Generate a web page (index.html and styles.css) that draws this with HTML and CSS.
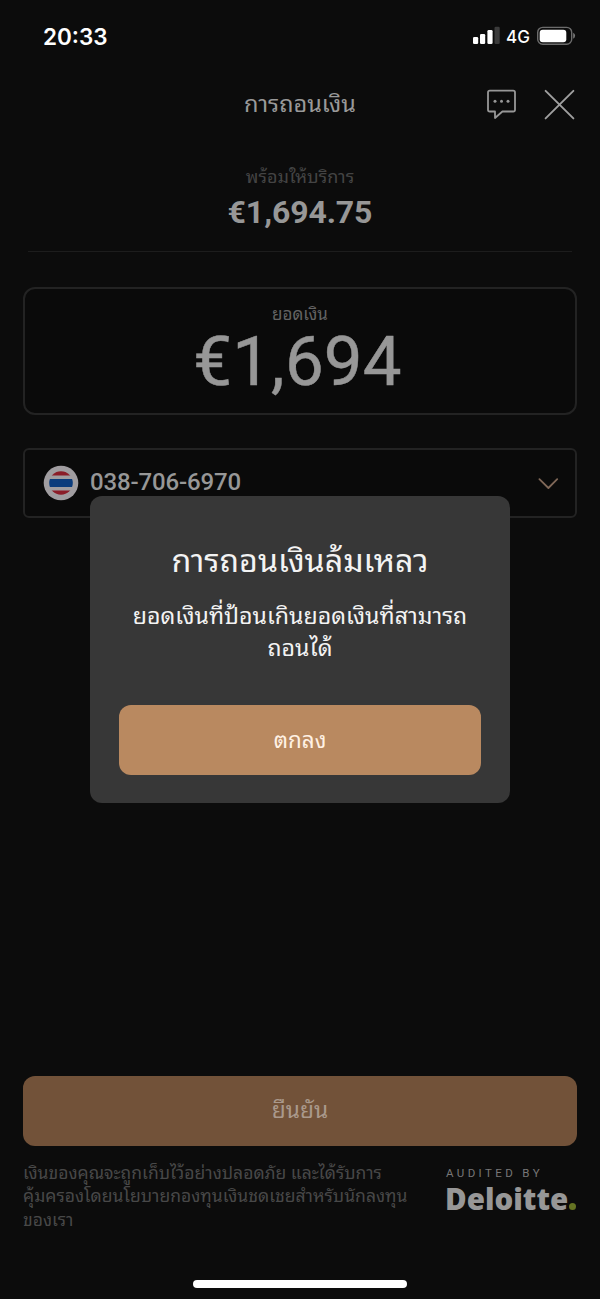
FILE: index.html
```html
<!DOCTYPE html>
<html lang="th">
<head>
<meta charset="utf-8">
<title>การถอนเงิน</title>
<link rel="stylesheet" href="styles.css">
</head>
<body>
<div class="screen">
  <div class="status-bar">
    <span class="clock">20:33</span>
    <div class="status-icons">
      <svg class="signal" width="28" height="18" viewBox="0 0 28 18">
        <rect x="0" y="11" width="5.2" height="7" rx="1.3" fill="#fff"/>
        <rect x="7" y="8" width="5.2" height="10" rx="1.3" fill="#fff"/>
        <rect x="14.4" y="4" width="5.2" height="14" rx="1.3" fill="#fff"/>
        <rect x="21.5" y="0.8" width="5.2" height="17.2" rx="1.3" fill="#3b3b3b"/>
      </svg>
      <span class="network">4G</span>
      <svg class="battery" width="40" height="20" viewBox="0 0 40 20">
        <rect x="0.7" y="1.4" width="34" height="16.8" rx="5" fill="none" stroke="#6c6c6c" stroke-width="1.4"/>
        <rect x="2.7" y="3.8" width="26.6" height="12.4" rx="3" fill="#fff"/>
        <path d="M36.2 6.8a3.3 3.3 0 0 1 0 6z" fill="#777"/>
      </svg>
    </div>
  </div>

  <header class="header">
    <h1 class="title">การถอนเงิน</h1>
    <div class="header-actions">
      <svg width="32" height="32" viewBox="0 0 32 32" fill="none" stroke="#979797" stroke-width="1.8" stroke-linejoin="round">
        <path d="M3.8 2.6H27.2Q29 2.6 29 4.4V21.7Q29 23.5 27.2 23.5H16.4L9 30V23.5H3.8Q2 23.5 2 21.7V4.4Q2 2.6 3.8 2.6Z"/>
        <g fill="#979797" stroke="none"><circle cx="9" cy="13.2" r="1.5"/><circle cx="15.5" cy="13.2" r="1.5"/><circle cx="22" cy="13.2" r="1.5"/></g>
      </svg>
      <svg width="32" height="32" viewBox="0 0 32 32" stroke="#a0a0a0" stroke-width="1.9" stroke-linecap="round">
        <path d="M1.6 2.8L29.4 30.4M29.4 2.8L1.6 30.4"/>
      </svg>
    </div>
  </header>

  <section class="available">
    <div class="available-label">พร้อมให้บริการ</div>
    <div class="available-value">€1,694.75</div>
  </section>

  <section class="amount">
    <div class="amount-label">ยอดเงิน</div>
    <div class="amount-value">€1,694</div>
  </section>

  <section class="account">
    <svg class="flag" width="36" height="36" viewBox="0 0 36 36">
      <defs><clipPath id="flag-disc"><circle cx="18" cy="18" r="11.8"/></clipPath></defs>
      <circle cx="18" cy="18" r="17.3" fill="#a09da0"/>
      <g clip-path="url(#flag-disc)">
        <path d="M5 6h26v4.5H5zM5 25.4h26v5H5z" fill="#8b1d28"/>
        <path d="M5 14h26v8H5z" fill="#0b3c7c"/>
      </g>
    </svg>
    <span class="account-number">038-706-6970</span>
    <svg class="chevron" width="22" height="14" viewBox="0 0 22 14" fill="none" stroke="#806858" stroke-width="1.8" stroke-linecap="round" stroke-linejoin="round">
      <path d="M2.4 3.2L11.4 12L20.2 3.2"/>
    </svg>
  </section>

  <footer class="footer">
    <button class="confirm">ยืนยัน</button>
    <div class="footer-row">
      <p class="notice">เงินของคุณจะถูกเก็บไว้อย่างปลอดภัย และได้รับการ<br>คุ้มครองโดยนโยบายกองทุนเงินชดเชยสำหรับนักลงทุน<br>ของเรา</p>
      <div class="auditor">
        <div class="audited">AUDITED BY</div>
        <div class="brand">Deloitte<i class="brand-dot"></i></div>
      </div>
    </div>
  </footer>
  <div class="home-indicator"></div>

  <div class="overlay">
    <div class="dialog">
      <h2 class="dialog-title">การถอนเงินล้มเหลว</h2>
      <p class="dialog-text">ยอดเงินที่ป้อนเกินยอดเงินที่สามารถ<br>ถอนได้</p>
      <button class="dialog-button">ตกลง</button>
    </div>
  </div>
</div>
</body>
</html>
```

FILE: styles.css
```css
* { box-sizing: border-box; }
body { margin: 0; background: #0c0c0c; }
h1, h2, p { margin: 0; font-weight: 400; }
button { border: 0; padding: 0; font: inherit; }
.screen {
  position: relative;
  display: flex;
  flex-direction: column;
  width: 600px;
  height: 1299px;
  overflow: hidden;
  background: #0c0c0c;
  color: #979797;
  font-family: Roboto, "Noto Sans Thai Looped", Thonburi, Loma, Waree, Umpush, Garuda, "Droid Sans Thai", "Noto Sans Thai", "Noto Sans", sans-serif;
  white-space: nowrap;
}
.status-bar {
  display: flex;
  justify-content: space-between;
  height: 72px;
  padding: 26px 23px 0 43px;
  color: #fff;
}
.clock { font: 600 22.5px/21px Inter, sans-serif; }
.status-icons { display: flex; align-items: flex-start; }
.signal { margin: 0 5px 0 0; }
.network { width: 31px; font: 500 17px/22px Inter, sans-serif; }
.header {
  display: flex;
  justify-content: space-between;
  align-items: center;
  height: 64px;
  padding: 0 24px 0 244px;
}
.title { font-size: 23.5px; line-height: 36px; color: #999; }
.header-actions { display: flex; gap: 26px; }
.available {
  height: 116px;
  margin: 0 28px;
  padding-top: 29px;
  border-bottom: 1px solid #1d1d1d;
  text-align: center;
}
.available-label { font-size: 18px; line-height: 24px; color: #444; }
.available-value { margin-top: 5px; font-size: 32px; line-height: 36px; font-weight: 700; letter-spacing: -0.1px; }
.amount {
  height: 128px;
  margin: 35px 23px 0;
  padding-top: 14px;
  border: 2px solid #232323;
  border-radius: 12px;
  background: #0a0a0a;
  text-align: center;
}
.amount-label { font-size: 17px; line-height: 22px; color: #636363; }
.amount-value { padding: 2px 5px 0 0; font-size: 69px; line-height: 70px; letter-spacing: 0.2px; -webkit-text-stroke: 0.5px #979797; }
.account {
  display: flex;
  align-items: center;
  height: 70px;
  margin: 33px 23px 0;
  padding: 0 16px 0 18px;
  border: 2px solid #232323;
  border-radius: 6px;
  background: #0a0a0a;
}
.account-number { margin: -2px 0 0 11px; font-size: 24px; line-height: 30px; font-weight: 500; letter-spacing: -0.15px; }
.chevron { margin-left: auto; }
.footer { margin-top: auto; padding: 0 23px; height: 204px; }
.confirm { display: block; width: 554px; height: 70px; padding-bottom: 6px; border-radius: 12px; background: #725239; color: #aa998c; font-size: 22.8px; }
.footer-row { display: flex; justify-content: space-between; padding-top: 17px; }
.notice { margin-top: -1px; font-size: 17.55px; line-height: 23.3px; color: #484848; }
.auditor { width: 132px; }
.audited { margin: 4px 0 0 1px; font-size: 11.5px; line-height: 13px; letter-spacing: 3.4px; color: #777; }
.brand { display: flex; align-items: baseline; margin-top: 1px; font: 800 29.5px/36px "Open Sans", sans-serif; letter-spacing: 0; }
.brand-dot { width: 7px; height: 7px; margin-left: 1px; border-radius: 50%; background: #657323; }
.home-indicator { width: 214px; height: 8px; margin: 0 auto 11px; border-radius: 4px; background: #fff; }
.overlay { position: absolute; inset: 0; display: flex; justify-content: center; align-items: center; }
.dialog { width: 420px; height: 307px; padding: 42px 29px 29px; border-radius: 12px; background: #373737; color: #f3f3f3; text-align: center; }
.dialog-title { font-size: 32.2px; line-height: 46px; }
.dialog-text { margin-top: 17px; font-size: 23.15px; line-height: 32px; }
.dialog-button { display: block; width: 362px; height: 70px; margin-top: 39.5px; padding-bottom: 4px; border-radius: 12px; background: #b98960; color: #fff1e4; font-size: 22.4px; }
```
